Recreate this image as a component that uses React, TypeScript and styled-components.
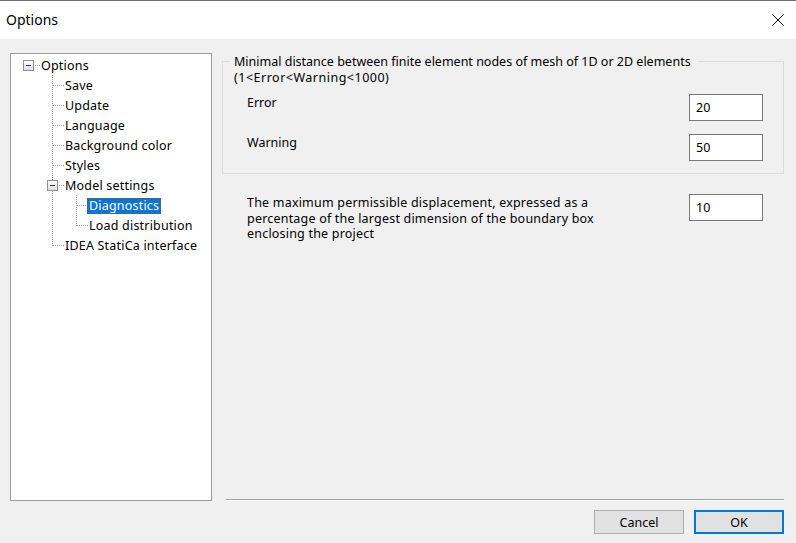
import React from "react";
import styled, { createGlobalStyle, css } from "styled-components";

const GlobalStyle = createGlobalStyle`
  html, body {
    margin: 0;
    padding: 0;
    background: #f0f0f0;
  }
  body {
    font-family: "Noto Sans", "DejaVu Sans", sans-serif;
    font-size: 12.5px;
    color: #000;
  }
  * { box-sizing: border-box; }
`;

const Window = styled.div`
  width: 796px;
  height: 543px;
  display: flex;
  flex-direction: column;
  background: #f0f0f0;
  overflow: hidden;
`;

const TitleBar = styled.div`
  height: 39px;
  flex: none;
  display: flex;
  align-items: center;
  justify-content: space-between;
  background: #ffffff;
  border-top: 1px solid #6e6e6e;
  padding: 0 12px 0 6px;
`;

const Title = styled.div`
  font-size: 14px;
  line-height: 18px;
  color: #000;
  margin-top: -1px;
`;

const CloseButton = styled.div`
  width: 12px;
  height: 12px;
  display: flex;
  align-items: center;
  justify-content: center;
`;

const Main = styled.div`
  display: flex;
  gap: 10px;
  padding: 14px 12px 0 10px;
  height: 462px;
  flex: none;
`;

const TreePanel = styled.div`
  width: 202px;
  height: 448px;
  flex: none;
  background: #ffffff;
  border: 1px solid #9c9c9c;
  padding: 1px 0 0 5px;
`;

const TreeRow = styled.div`
  display: flex;
  align-items: center;
  height: 20px;
`;

const ConnectorCell = styled.svg`
  flex: none;
  display: block;
  width: 24px;
  height: 20px;
`;

const Label = styled.span<{ $selected?: boolean }>`
  margin: 1px 0 0 -1px;
  padding: 0 1px;
  line-height: 14px;
  letter-spacing: 0.2px;
  white-space: nowrap;
  border: 1px solid transparent;
  ${(p) =>
    p.$selected &&
    css`
      background: #0a74d8;
      color: #ffffff;
      border: 1px dotted #7a5a2a;
    `}
`;

const Content = styled.div`
  flex: 1;
  display: flex;
  flex-direction: column;
  height: 448px;
`;

const GroupBox = styled.div`
  margin-top: 8px;
  border: 1px solid #dcdcdc;
  padding: 0 20px 12px 24px;
`;

const Legend = styled.div`
  width: fit-content;
  margin: -8px 0 0 -17px;
  padding: 0 7px 0 4px;
  background: #f0f0f0;
  line-height: 16px;
`;

const Range = styled.span`
  letter-spacing: 0.5px;
`;

const FieldRow = styled.div<{ $gap: number }>`
  display: flex;
  justify-content: space-between;
  align-items: flex-start;
  margin-top: ${(p) => p.$gap}px;
`;

const FieldLabel = styled.div`
  line-height: 16px;
  padding-top: 1px;
`;

const TextInput = styled.input`
  width: 74px;
  height: 27px;
  flex: none;
  border: 1px solid #7a7a7a;
  background: #ffffff;
  padding: 0 6px;
  font-family: inherit;
  font-size: 12.5px;
  color: #000;
  outline: none;
  margin: 0;
`;

const DisplacementRow = styled.div`
  display: flex;
  justify-content: space-between;
  align-items: flex-start;
  margin-top: 20px;
  padding: 0 21px 0 25px;
`;

const Paragraph = styled.div`
  line-height: 15.5px;
  padding-top: 1px;
  letter-spacing: 0.2px;
`;

const Spacer = styled.div`
  flex: 1;
`;

const Separator = styled.div`
  height: 2px;
  margin-left: 4px;
  border-top: 1px solid #a0a0a0;
  border-bottom: 1px solid #ffffff;
`;

const Footer = styled.div`
  display: flex;
  justify-content: flex-end;
  gap: 10px;
  padding: 9px 12px 0 0;
`;

const Button = styled.button<{ $primary?: boolean }>`
  width: 90px;
  height: 24px;
  margin: 0;
  padding: 0;
  background: #e1e1e1;
  border: 1px solid #adadad;
  font-family: inherit;
  font-size: 12.5px;
  color: #000;
  ${(p) =>
    p.$primary &&
    css`
      border: 2px solid #0078d7;
    `}
`;

type Node = {
  label: string;
  level: number;
  expander?: boolean;
  top: boolean;
  bottom: boolean;
  guides: boolean[];
  selected?: boolean;
};

const nodes: Node[] = [
  { label: "Options", level: 0, expander: true, top: false, bottom: false, guides: [] },
  { label: "Save", level: 1, top: true, bottom: true, guides: [false] },
  { label: "Update", level: 1, top: true, bottom: true, guides: [false] },
  { label: "Language", level: 1, top: true, bottom: true, guides: [false] },
  { label: "Background color", level: 1, top: true, bottom: true, guides: [false] },
  { label: "Styles", level: 1, top: true, bottom: true, guides: [false] },
  { label: "Model settings", level: 1, expander: true, top: true, bottom: true, guides: [false] },
  { label: "Diagnostics", level: 2, top: true, bottom: true, guides: [false, true], selected: true },
  { label: "Load distribution", level: 2, top: true, bottom: false, guides: [false, true] },
  { label: "IDEA StatiCa interface", level: 1, top: true, bottom: false, guides: [false] },
];

const LINE = "#a0a0a0";

const Guide: React.FC<{ on: boolean }> = ({ on }) => (
  <ConnectorCell viewBox="0 0 24 20">
    {on && (
      <line x1="12.5" y1="0" x2="12.5" y2="20" stroke={LINE} strokeWidth="1" strokeDasharray="1 1" />
    )}
  </ConnectorCell>
);

const Connector: React.FC<{ node: Node }> = ({ node }) => (
  <ConnectorCell viewBox="0 0 24 20">
    {node.top && (
      <line
        x1="12.5"
        y1="0"
        x2="12.5"
        y2={node.bottom ? 20 : 11}
        stroke={LINE}
        strokeWidth="1"
        strokeDasharray="1 1"
      />
    )}
    <line
      x1={node.expander ? 17 : 13}
      y1="10.5"
      x2="24"
      y2="10.5"
      stroke={LINE}
      strokeWidth="1"
      strokeDasharray="1 1"
    />
    {node.expander && (
      <g>
        <defs>
          <linearGradient id={`exp-${node.level}`} x1="0" y1="0" x2="0" y2="1">
            <stop offset="0" stopColor="#ffffff" />
            <stop offset="1" stopColor="#dcdcdc" />
          </linearGradient>
        </defs>
        <rect x="7.5" y="5.5" width="10" height="10" fill={`url(#exp-${node.level})`} stroke="#8f8f9c" strokeWidth="1" />
        <line x1="10" y1="10.5" x2="15" y2="10.5" stroke="#22335a" strokeWidth="1" />
      </g>
    )}
  </ConnectorCell>
);

const TreeItem: React.FC<{ node: Node }> = ({ node }) => (
  <TreeRow>
    {node.guides.map((g, i) => (
      <Guide key={i} on={g} />
    ))}
    <Connector node={node} />
    <Label $selected={node.selected}>{node.label}</Label>
  </TreeRow>
);

export default function App() {
  return (
    <>
      <GlobalStyle />
      <Window>
        <TitleBar>
          <Title>Options</Title>
          <CloseButton>
            <svg width="12" height="12" viewBox="0 0 12 12">
              <path d="M0.5 0.5 L11.5 11.5 M11.5 0.5 L0.5 11.5" stroke="#000" strokeWidth="1" fill="none" />
            </svg>
          </CloseButton>
        </TitleBar>
        <Main>
          <TreePanel>
            {nodes.map((n) => (
              <TreeItem key={n.label} node={n} />
            ))}
          </TreePanel>
          <Content>
            <GroupBox>
              <Legend>
                Minimal distance between finite element nodes of mesh of 1D or 2D elements
                <br />
                <Range>(1&lt;Error&lt;Warning&lt;1000)</Range>
              </Legend>
              <FieldRow $gap={8}>
                <FieldLabel>Error</FieldLabel>
                <TextInput defaultValue="20" readOnly />
              </FieldRow>
              <FieldRow $gap={13}>
                <FieldLabel>Warning</FieldLabel>
                <TextInput defaultValue="50" readOnly />
              </FieldRow>
            </GroupBox>
            <DisplacementRow>
              <Paragraph>
                The maximum permissible displacement, expressed as a
                <br />
                percentage of the largest dimension of the boundary box
                <br />
                enclosing the project
              </Paragraph>
              <TextInput defaultValue="10" readOnly />
            </DisplacementRow>
            <Spacer />
            <Separator />
          </Content>
        </Main>
        <Footer>
          <Button>Cancel</Button>
          <Button $primary>OK</Button>
        </Footer>
      </Window>
    </>
  );
}
